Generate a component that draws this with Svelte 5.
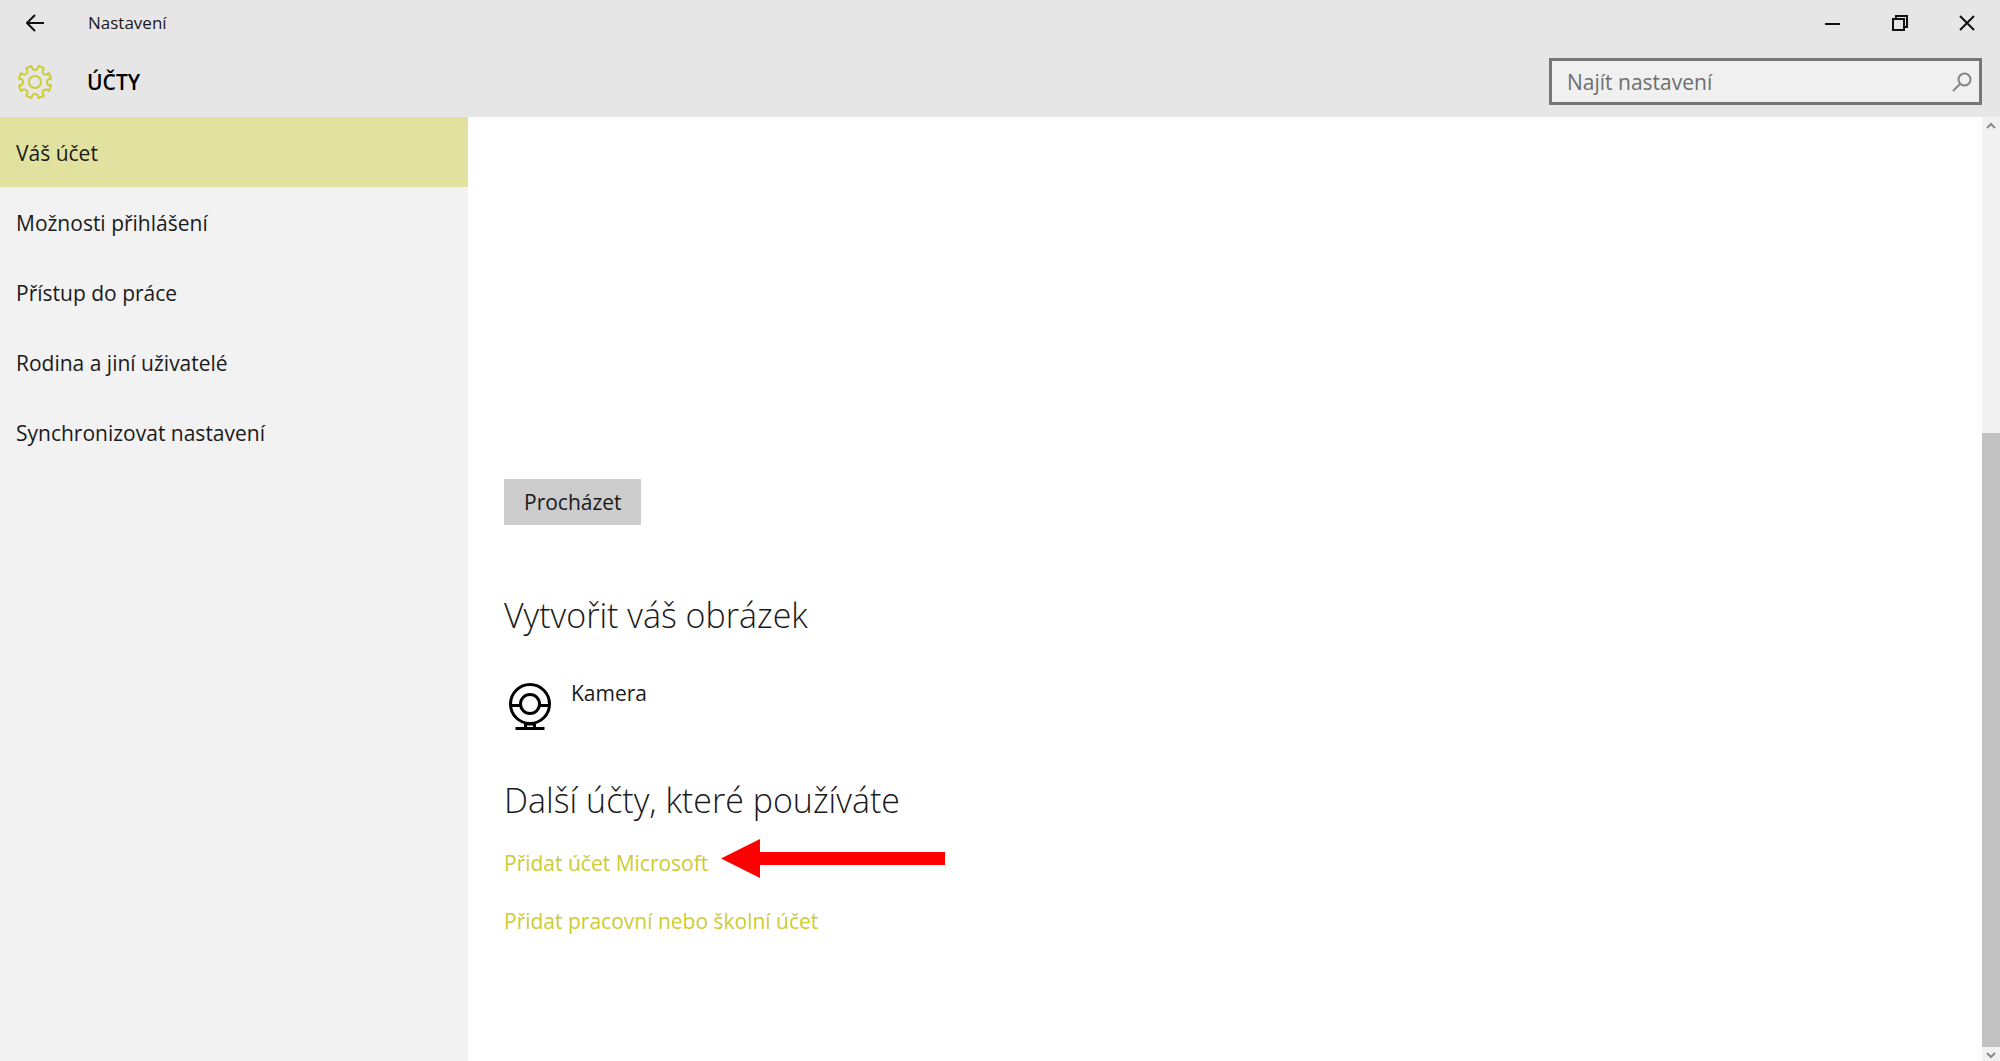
<script>
	const items = [
		'Váš účet',
		'Možnosti přihlášení',
		'Přístup do práce',
		'Rodina a jiní uživatelé',
		'Synchronizovat nastavení'
	];

	let selected = 0;
	let search = '';

	function point(radius, deg) {
		const a = (deg * Math.PI) / 180;
		return `${(18 + radius * Math.cos(a)).toFixed(2)} ${(18 + radius * Math.sin(a)).toFixed(2)}`;
	}

	// eight teeth, with a rounded valley between each pair
	function gearPath() {
		let d = '';
		for (let i = 0; i < 8; i++) {
			const a = 22.5 + i * 45;
			d += `${i ? 'L' : 'M'}${point(13.5, a - 11)} L${point(16.5, a - 10)} L${point(16.5, a + 10)} L${point(13.5, a + 11)}`;
			d += ` Q${point(10.5, a + 22.5)} ${point(13.5, a + 34)} `;
		}
		return d + 'Z';
	}
</script>

<div class="window">
	<header>
		<div class="titlebar">
			<button type="button" class="back" aria-label="Zpět">
				<svg width="18" height="18" viewBox="0 0 18 18">
					<path d="M18 9H1M9 1L1 9l8 8" />
				</svg>
			</button>
			<span class="title">Nastavení</span>
			<div class="controls">
				<button type="button" aria-label="Minimalizovat">
					<svg width="16" height="16" viewBox="0 0 16 16"><path d="M0 9h15" /></svg>
				</button>
				<button type="button" aria-label="Obnovit">
					<svg width="16" height="16" viewBox="0 0 16 16">
						<path d="M1 4h11v11H1zM4 4V1h11v11h-3" />
					</svg>
				</button>
				<button type="button" aria-label="Zavřít">
					<svg width="16" height="16" viewBox="0 0 16 16"><path d="M1 1l14 14M15 1L1 15" /></svg>
				</button>
			</div>
		</div>
		<div class="heading">
			<svg class="gear" width="36" height="36" viewBox="0 0 36 36">
				<path d={gearPath()} />
				<circle cx="18" cy="18" r="6" />
			</svg>
			<h1>ÚČTY</h1>
			<label class="search">
				<input type="text" bind:value={search} placeholder="Najít nastavení" aria-label="Najít nastavení" />
				<svg width="20" height="20" viewBox="0 0 20 20">
					<circle cx="12.500" cy="7.500" r="6" />
					<path d="M8 12L1 19" />
				</svg>
			</label>
		</div>
	</header>

	<div class="body">
		<nav>
			{#each items as item, i}
				<button type="button" class:selected={selected === i} on:click={() => (selected = i)}>
					{item}
				</button>
			{/each}
		</nav>

		<main>
			<button type="button" class="browse">Procházet</button>

			<h2>Vytvořit váš obrázek</h2>
			<button type="button" class="camera">
				<svg width="44" height="50" viewBox="0 0 44 50">
					<circle cx="22" cy="22" r="19.500" />
					<circle cx="22" cy="22" r="9.500" />
					<path d="M2.500 23.500h10M31.500 23.500h10M17.500 41v5M26.500 41v5M17.500 42h9M7.500 46.500h29" />
				</svg>
				<span>Kamera</span>
			</button>

			<h2>Další účty, které používáte</h2>
			<p>
				<a href="#microsoft">Přidat účet Microsoft</a>
				<svg class="arrow" width="224" height="39" viewBox="0 0 224 39">
					<path d="M0 19.500L39 0v13h185v13H39v13z" />
				</svg>
			</p>
			<p><a href="#work">Přidat pracovní nebo školní účet</a></p>
		</main>

		<div class="scrollbar">
			<svg width="18" height="14" viewBox="0 0 18 14"><path d="M5 11l4-4 4 4" /></svg>
			<div class="track"><div class="thumb"></div></div>
			<svg width="18" height="14" viewBox="0 0 18 14"><path d="M5 6l4 4 4-4" /></svg>
		</div>
	</div>
</div>

<style>
	:global(body) {
		margin: 0;
	}
	.window {
		display: flex;
		flex-direction: column;
		min-height: 100vh;
		background: #fff;
		color: #1a1a1a;
		font-family: 'Open Sans', 'Noto Sans', sans-serif;
		font-size: 21px;
		line-height: 30px;
	}
	button {
		border: 0;
		padding: 0;
		background: none;
		color: inherit;
		font: inherit;
		text-align: left;
	}
	svg {
		display: block;
		flex: none;
		fill: none;
		stroke: #111;
		stroke-width: 2;
	}
	header {
		background: #e6e6e6;
	}
	.titlebar {
		display: flex;
		align-items: center;
		height: 46px;
	}
	.back {
		display: flex;
		justify-content: center;
		width: 70px;
		margin-right: 18px;
	}
	.title {
		flex: 1;
		font-size: 17px;
	}
	.controls {
		display: flex;
	}
	.controls button {
		display: flex;
		justify-content: center;
		align-items: center;
		width: 67px;
		height: 46px;
	}
	.heading {
		display: flex;
		align-items: center;
		height: 71px;
		padding: 0 18px 0 17px;
	}
	.gear {
		stroke: #cccc33;
		stroke-linejoin: round;
	}
	h1 {
		flex: 1;
		margin: 0 0 0 34px;
		color: #000;
		font-size: 21px;
		font-weight: 600;
	}
	.search {
		display: flex;
		align-items: center;
		box-sizing: border-box;
		width: 433px;
		height: 47px;
		padding: 0 7px 0 15px;
		border: 3px solid #767676;
		background: #f0f0f0;
	}
	.search input {
		flex: 1;
		min-width: 0;
		border: 0;
		padding: 0;
		outline: 0;
		background: none;
		font: inherit;
	}
	.search input::placeholder {
		color: #6e6e6e;
	}
	.search svg {
		stroke: #858585;
	}
	.body {
		display: flex;
		flex: 1;
	}
	nav {
		display: flex;
		flex-direction: column;
		flex: none;
		width: 468px;
		background: #f2f2f2;
	}
	nav button {
		height: 70px;
		padding: 2px 16px 0;
	}
	nav .selected {
		background: #e2e2a0;
	}
	main {
		flex: 1;
		padding: 362px 36px 60px;
	}
	.browse {
		height: 46px;
		padding: 0 19px 0 20px;
		background: #ccc;
	}
	h2 {
		margin: 64px 0 41px;
		font-size: 34px;
		font-weight: 300;
		line-height: 52px;
	}
	.camera {
		display: flex;
		gap: 19px;
		margin-left: 4px;
		line-height: 22px;
	}
	.camera svg {
		stroke: #000;
		stroke-width: 3;
	}
	.camera + h2 {
		margin: 42px 0 22px;
	}
	p {
		position: relative;
		width: fit-content;
		margin: 0 0 28px;
	}
	a {
		color: #cccc33;
		text-decoration: none;
	}
	/* the pointer lies over the page, beside the link */
	.arrow {
		position: absolute;
		top: -9px;
		left: calc(100% + 13px);
	}
	.arrow path {
		fill: #f00;
		stroke: none;
	}
	.scrollbar {
		display: flex;
		flex-direction: column;
		width: 18px;
		background: #f1f1f1;
	}
	.scrollbar svg {
		stroke: #8a8a8a;
	}
	.track {
		display: flex;
		flex: 1;
		align-items: flex-end;
	}
	.thumb {
		width: 100%;
		height: 67%;
		background: #c1c1c1;
	}
</style>
